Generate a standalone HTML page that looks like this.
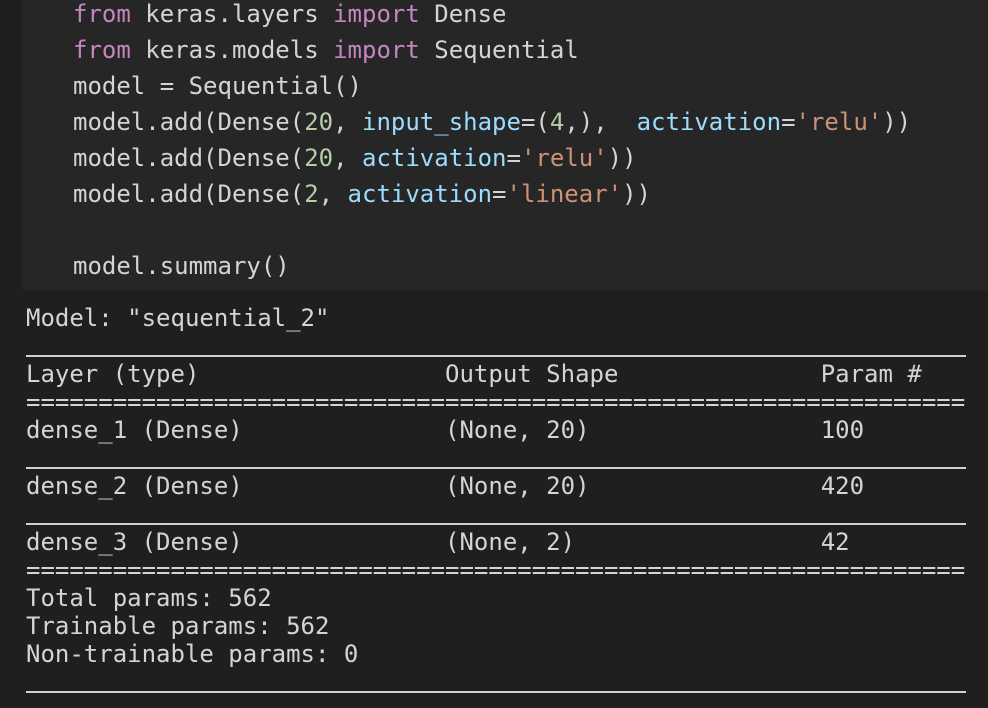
<!DOCTYPE html>
<html><head><style>
html,body{margin:0;padding:0;background:#1f1f1f;width:988px;height:708px;overflow:hidden;}
body{position:relative;font-family:"DejaVu Sans Mono","Liberation Mono",monospace;font-size:24px;color:#d4d4d4;}
.cell{position:absolute;left:22px;top:0;width:966px;height:290px;background:#262626;}
.code{position:absolute;left:73px;top:-4px;line-height:36px;white-space:pre;}
.k{color:#c586c0}.n{color:#b5cea8}.p{color:#9cdcfe}.s{color:#ce9178}
.o{position:absolute;left:26px;white-space:pre;line-height:28px;height:28px;}
.r{position:absolute;left:26px;width:940px;height:2px;background:#cfcfcf;}
.eq{position:absolute;left:26px;width:940px;overflow:hidden;white-space:pre;line-height:28px;height:28px;}
</style></head><body>
<div class="cell"></div>
<div class="code"><span class="k">from</span> keras.layers <span class="k">import</span> Dense
<span class="k">from</span> keras.models <span class="k">import</span> Sequential
model = Sequential()
model.add(Dense(<span class="n">20</span>, <span class="p">input_shape</span>=(<span class="n">4</span>,),  <span class="p">activation</span>=<span class="s">'relu'</span>))
model.add(Dense(<span class="n">20</span>, <span class="p">activation</span>=<span class="s">'relu'</span>))
model.add(Dense(<span class="n">2</span>, <span class="p">activation</span>=<span class="s">'linear'</span>))

model.summary()</div>
<div class="o" style="top:304px">Model: "sequential_2"</div>
<div class="r" style="top:355px"></div>
<div class="o" style="top:360px">Layer (type)                 Output Shape              Param #</div>
<div class="eq" style="top:388px">=================================================================</div>
<div class="o" style="top:416px">dense_1 (Dense)              (None, 20)                100</div>
<div class="r" style="top:467px"></div>
<div class="o" style="top:472px">dense_2 (Dense)              (None, 20)                420</div>
<div class="r" style="top:523px"></div>
<div class="o" style="top:528px">dense_3 (Dense)              (None, 2)                 42</div>
<div class="eq" style="top:556px">=================================================================</div>
<div class="o" style="top:584px">Total params: 562</div>
<div class="o" style="top:612px">Trainable params: 562</div>
<div class="o" style="top:640px">Non-trainable params: 0</div>
<div class="r" style="top:691px"></div>
</body></html>
